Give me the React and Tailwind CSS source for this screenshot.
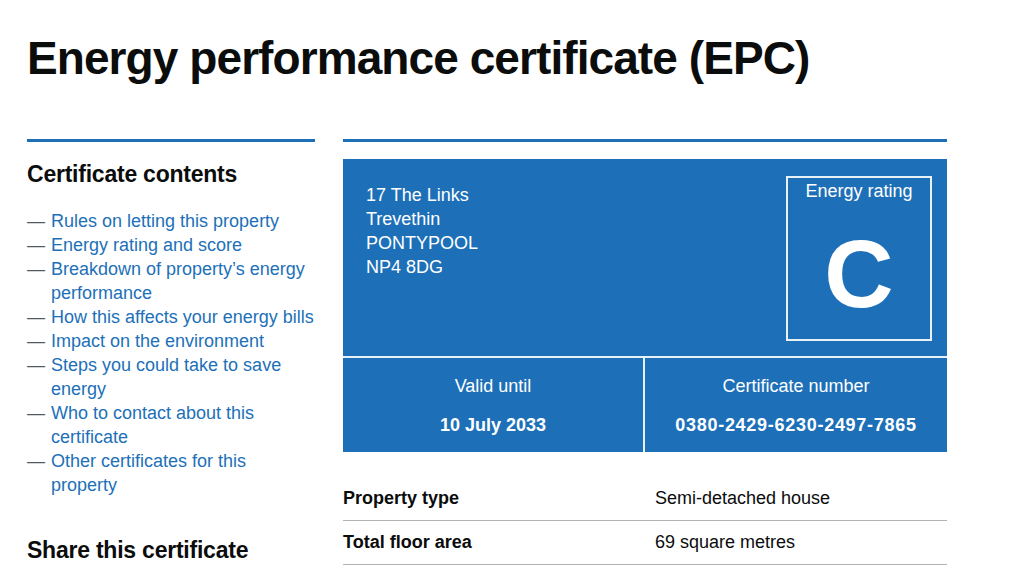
export default function App() {
  const links = [
    ["Rules on letting this property"],
    ["Energy rating and score"],
    ["Breakdown of property\u2019s energy", "performance"],
    ["How this affects your energy bills"],
    ["Impact on the environment"],
    ["Steps you could take to save", "energy"],
    ["Who to contact about this", "certificate"],
    ["Other certificates for this", "property"],
  ];
  return (
    <div
      className="w-[1024px] h-[573px] overflow-hidden bg-white text-[#0b0c0c]"
      style={{ fontFamily: '"Liberation Sans", Arial, sans-serif' }}
    >
      <div className="pl-[27px] pt-[34px]">
        <h1 className="text-[46px] font-bold leading-[48px] tracking-[-0.02em]">
          Energy performance certificate (EPC)
        </h1>
        <div className="flex gap-[28px] mt-[57px]">
          <div className="w-[288px] shrink-0 border-t-[3px] border-[#1d70b8] pt-[20px]">
            <h2 className="text-[23px] font-bold leading-[24px] tracking-[-0.01em]">
              Certificate contents
            </h2>
            <ul className="mt-[23px] w-[300px]">
              {links.map((l) => (
                <li key={l[0]} className="flex text-[18px] leading-[24px]">
                  <span className="w-[24px] shrink-0 text-[#505a5f]">—</span>
                  <a className="text-[#1d70b8] whitespace-nowrap">
                    {l.map((line, i) => (
                      <span key={i} className="block">
                        {line}
                      </span>
                    ))}
                  </a>
                </li>
              ))}
            </ul>
            <h2 className="mt-[41px] text-[23px] font-bold leading-[24px] tracking-[-0.01em]">
              Share this certificate
            </h2>
          </div>
          <div className="w-[604px] shrink-0 border-t-[3px] border-[#1d70b8] pt-[17px]">
            <div className="bg-[#1d70b8] text-white">
              <div className="flex justify-between h-[197px]">
                <div className="pl-[23px] pt-[24px] text-[18px] leading-[24px]">
                  <div>17 The Links</div>
                  <div>Trevethin</div>
                  <div>PONTYPOOL</div>
                  <div>NP4 8DG</div>
                </div>
                <div className="pr-[15px] pt-[17px]">
                  <div className="w-[146px] h-[165px] border-2 border-[#e8f1f8] flex flex-col items-center">
                    <div className="pt-[1px] text-[18px] leading-[24px]">Energy rating</div>
                    <div className="mt-[23px] text-[96px] font-bold leading-[96px]">C</div>
                  </div>
                </div>
              </div>
              <div className="grid grid-cols-2 border-t-2 border-[#e8f1f8] h-[96px]">
                <div className="text-center pt-[16px] border-r-2 border-[#e8f1f8]">
                  <div className="text-[18px] leading-[24px]">Valid until</div>
                  <div className="mt-[15px] text-[18px] leading-[24px] font-bold">10 July 2033</div>
                </div>
                <div className="text-center pt-[16px]">
                  <div className="text-[18px] leading-[24px]">Certificate number</div>
                  <div className="mt-[15px] text-[18px] leading-[24px] font-bold tracking-[0.04em]">
                    0380-2429-6230-2497-7865
                  </div>
                </div>
              </div>
            </div>
            <dl className="mt-[25px] text-[18px] leading-[24px]">
              <div className="flex border-b border-[#b1b4b6] pt-[9px] pb-[10px]">
                <dt className="w-[312px] font-bold">Property type</dt>
                <dd>Semi-detached house</dd>
              </div>
              <div className="flex border-b border-[#b1b4b6] pt-[9px] pb-[10px]">
                <dt className="w-[312px] font-bold">Total floor area</dt>
                <dd>69 square metres</dd>
              </div>
            </dl>
          </div>
        </div>
      </div>
    </div>
  );
}
